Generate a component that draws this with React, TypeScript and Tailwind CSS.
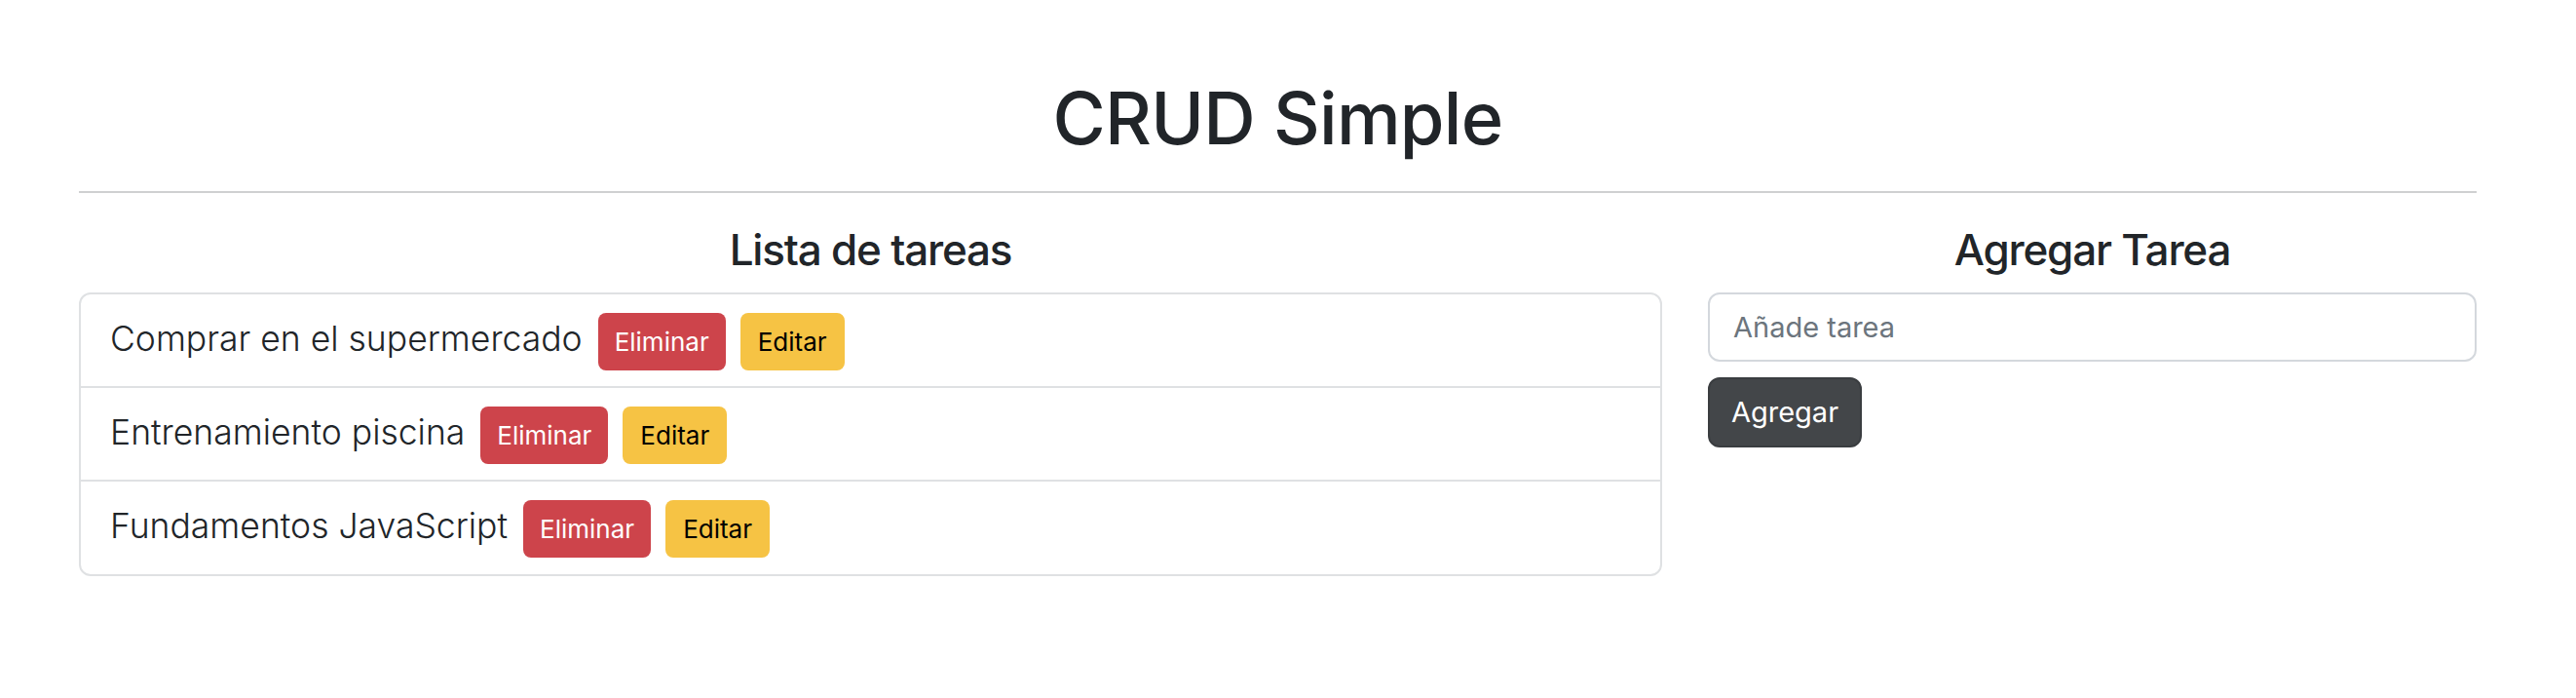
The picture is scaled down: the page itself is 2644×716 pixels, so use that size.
import React from "react";

const tasks = [
  "Comprar en el supermercado",
  "Entrenamiento piscina",
  "Fundamentos JavaScript",
];

export default function App() {
  return (
    <div className="min-h-[716px] bg-white text-[#212529] font-['Inter','Noto_Sans',sans-serif]">
      <div className="ml-[81px] w-[2461px] pt-[77px]">
        <h1 className="text-center text-[74px] leading-[89px] font-medium tracking-[-0.01em]">
          CRUD Simple
        </h1>
        <div className="mt-[30px] h-[2px] bg-[#cfd0d1]" />
        <div className="mt-[32px] flex gap-[47px]">
          <div className="w-[1625px]">
            <h4 className="text-center text-[44px] leading-[53px] font-medium tracking-[-1.2px]">
              Lista de tareas
            </h4>
            <ul className="mt-[17px] rounded-[12px] border-2 border-[#dfe1e3]">
              {tasks.map((t, i) => (
                <li
                  key={t}
                  className={
                    "flex items-baseline pl-[30px] pt-[19px] " +
                    (i < tasks.length - 1 ? "h-[96px] border-b-2 border-[#dfe1e3]" : "h-[95px]")
                  }
                >
                  <span className="text-[35.5px] font-light leading-[44px]">{t}</span>
                  <button className="ml-[16px] flex h-[59px] w-[131px] items-center justify-center rounded-[8px] bg-[#cd444b] text-[26px] text-white">
                    Eliminar
                  </button>
                  <button className="ml-[15px] flex h-[59px] w-[107px] items-center justify-center rounded-[8px] bg-[#f6c344] text-[26px] text-black">
                    Editar
                  </button>
                </li>
              ))}
            </ul>
          </div>
          <div className="w-[789px]">
            <h4 className="text-center text-[44px] leading-[53px] font-medium tracking-[-1.2px]">
              Agregar Tarea
            </h4>
            <input
              className="mt-[17px] block h-[71px] w-full rounded-[12px] border-2 border-[#d4d8dd] px-[24px] text-[29px] placeholder:text-[#6c757d] outline-none"
              placeholder="Añade tarea"
            />
            <button className="mt-[16px] flex h-[72px] w-[158px] items-center justify-center rounded-[12px] border-2 border-[#3a3d40] bg-[#434649] text-[29px] text-white">
              Agregar
            </button>
          </div>
        </div>
      </div>
    </div>
  );
}
